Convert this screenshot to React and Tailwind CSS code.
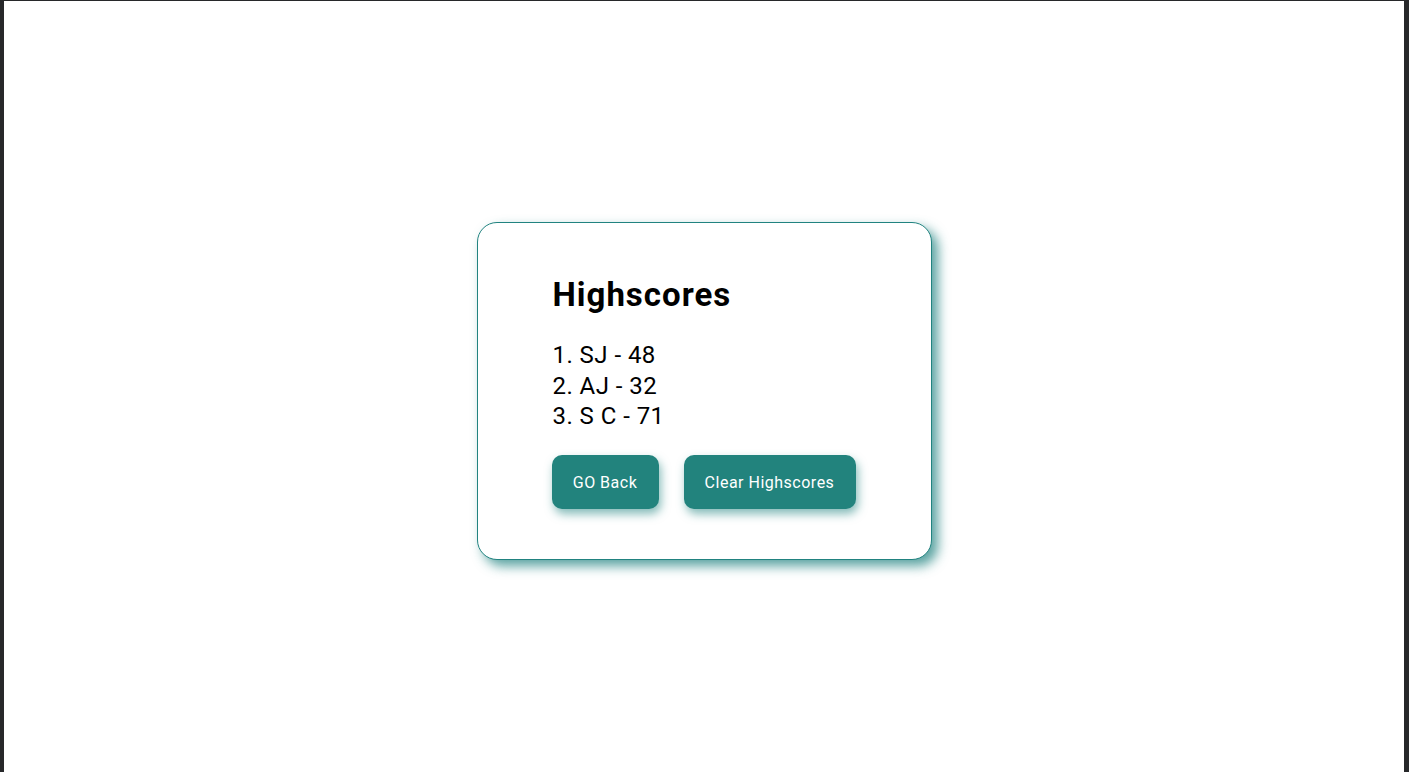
export default function App() {
  return (
    <div
      className="h-[772px] w-[1409px] bg-[#27282a] pt-px pl-[4px] pr-[5px] overflow-hidden"
      style={{ fontFamily: "Roboto, 'Liberation Sans', sans-serif" }}
    >
      <div className="h-full w-full bg-white flex flex-col items-center pt-[221px]">
        <div className="w-[455px] h-[338px] rounded-[20px] border border-[#218380] bg-white shadow-[6px_6px_12px_rgba(33,131,128,0.75)] pl-[75px] pt-[52px]">
          <h1 className="text-[33px] leading-[39px] tracking-[1px] font-bold text-black m-0">Highscores</h1>
          <ol className="mt-[26px] text-[24px] leading-[30.5px] tracking-[0.45px] text-black">
            <li>1. SJ - 48</li>
            <li>2. AJ - 32</li>
            <li>3. S C - 71</li>
          </ol>
          <div className="mt-[23px] -ml-px flex gap-[25px]">
            <button className="w-[107px] h-[54px] pt-[3px] rounded-[10px] bg-[#22837d] text-white text-[16px] tracking-[0.5px] shadow-[2px_5px_10px_rgba(33,131,128,0.55)]">
              GO Back
            </button>
            <button className="w-[172px] h-[54px] pt-[3px] rounded-[10px] bg-[#22837d] text-white text-[16px] tracking-[0.5px] shadow-[2px_5px_10px_rgba(33,131,128,0.55)]">
              Clear Highscores
            </button>
          </div>
        </div>
      </div>
    </div>
  );
}
